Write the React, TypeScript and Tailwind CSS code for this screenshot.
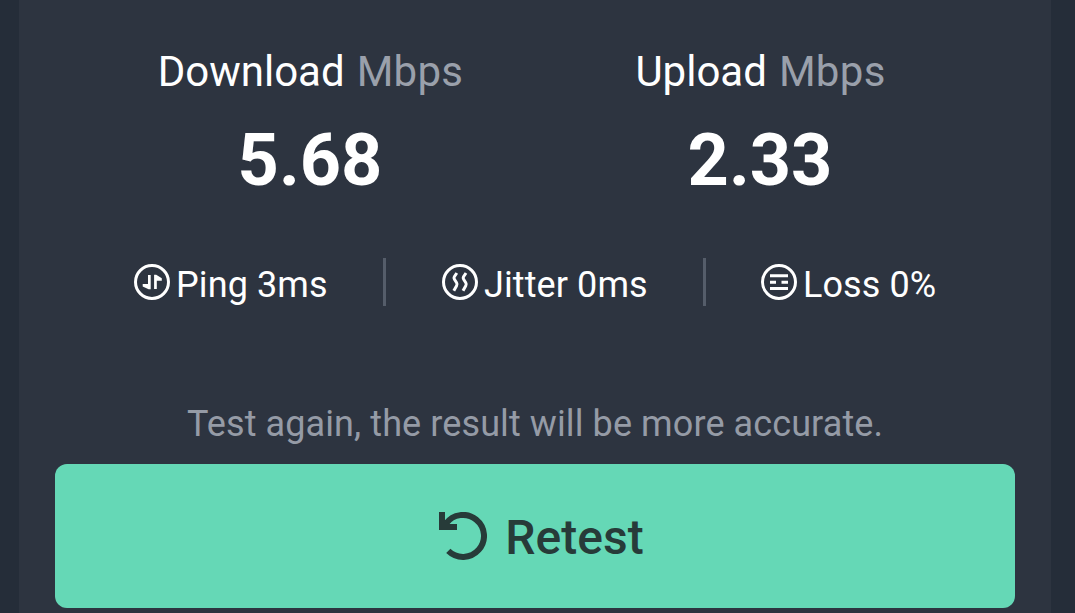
import type { ReactNode } from "react";

function Result({ label, value }: { label: string; value: string }) {
  return (
    <div className="flex w-[450px] flex-col items-center">
      <div className="flex h-[50px] gap-[12px] whitespace-nowrap pl-px text-[42px] leading-[50px] text-white">
        <span>{label}</span>
        <span className="tracking-[0.3px] text-[#9aa0ab]">Mbps</span>
      </div>
      <div className="mt-[22px] h-[84px] text-[72px] font-bold leading-[84px] text-white">{value}</div>
    </div>
  );
}

function Stat({ text, width, children }: { text: string; width: string; children: ReactNode }) {
  return (
    <div className={`flex items-center ${width}`}>
      <svg viewBox="0 0 36 36" className="-mt-[1px] mr-[6px] h-9 w-9 shrink-0" fill="none" stroke="#fff">
        <circle cx="18" cy="18" r="16.5" strokeWidth="3" />
        {children}
      </svg>
      <span className="mt-[6px] whitespace-nowrap text-[36px] leading-[42px] tracking-[0.1px] text-white">{text}</span>
    </div>
  );
}

function Divider() {
  return <div className="h-12 w-[3px] shrink-0 bg-[#555d6a]" />;
}

export default function App() {
  return (
    <div className="h-[613px] w-[1075px] overflow-hidden bg-[#252d39] pl-[19px] font-['Roboto',sans-serif]">
      <main className="flex h-full w-[1032px] flex-col items-center bg-[#2d3440] pt-[47px]">
        <section className="flex">
          <Result label="Download" value="5.68" />
          <Result label="Upload" value="2.33" />
        </section>
        <section className="mt-[55px] flex h-12 items-center justify-center gap-14">
          <Stat text="Ping 3ms" width="w-[193px]">
            <path
              d="M14 11H16.7V25.2H14.6L8.7 22.6V20H14ZM20.1 25V10.8H22.2L27.8 14.2V16.8H22.8V25Z"
              fill="#fff"
              stroke="none"
            />
          </Stat>
          <Divider />
          <Stat text="Jitter 0ms" width="w-[205px]">
            <path
              d="M14.8 9L12.3 12.8Q11.6 14 12.4 15.3L14.6 18.8Q15.5 20.3 14.6 21.8L11.8 26.8M24 9L21.5 12.8Q20.8 14 21.6 15.3L23.8 18.8Q24.7 20.3 23.8 21.8L21 26.8"
              strokeWidth="3"
            />
          </Stat>
          <Divider />
          <Stat text="Loss 0%" width="-ml-px w-[175px]">
            <path d="M9 11.8H27M9 18.2H15M20.5 18.2H27M9 24.5H27" strokeWidth="3" />
          </Stat>
        </section>
        <p className="mt-[97px] h-[42px] whitespace-nowrap text-[36px] leading-[42px] tracking-[0.1px] text-[#959ba6]">
          Test again, the result will be more accurate.
        </p>
        <button className="mt-[19px] flex h-36 w-[960px] shrink-0 items-center justify-center rounded-xl bg-[#65d8b6] pl-[13px] text-[#273b39]">
          <svg viewBox="0 0 48 48" className="mr-[18px] h-12 w-12" fill="none">
            <path d="M7 11.6A21 21 0 1 1 9.3 38.9" stroke="currentColor" strokeWidth="6" />
            <path d="M0 0H6V8L10 12H18V18H0Z" fill="currentColor" />
          </svg>
          <span className="mt-1 text-[48px] font-medium leading-[56px]">Retest</span>
        </button>
      </main>
    </div>
  );
}
